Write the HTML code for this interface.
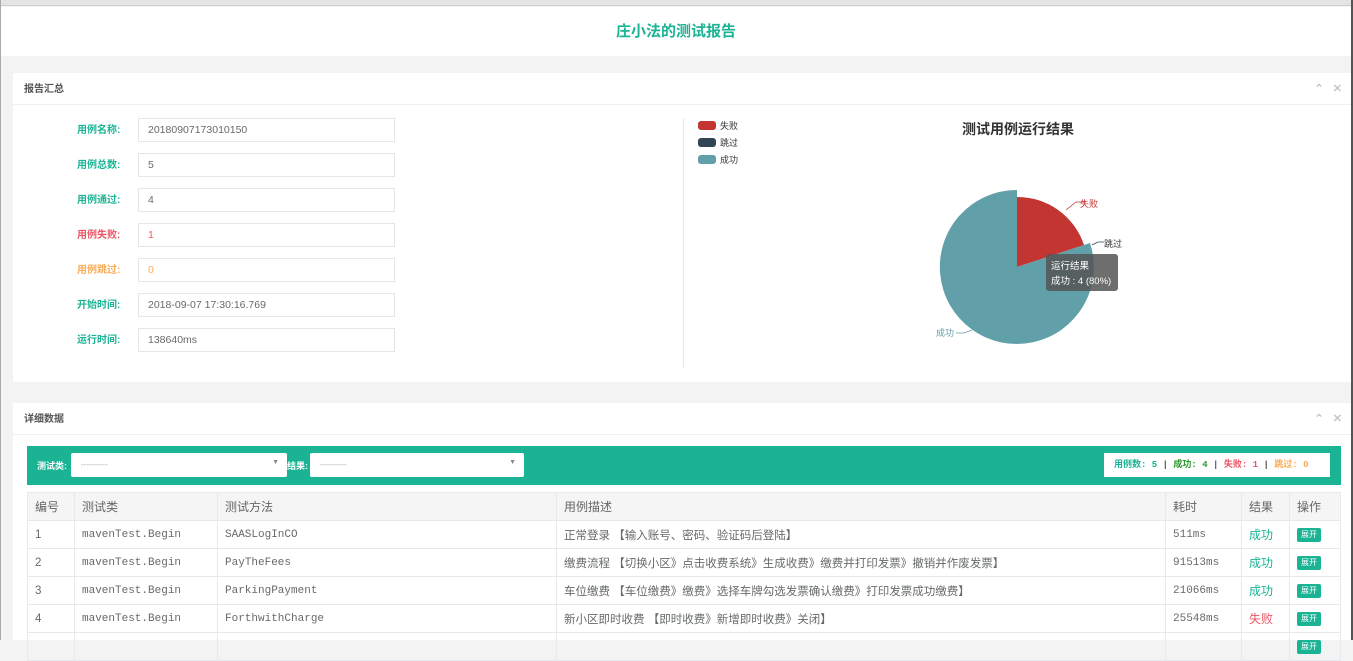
<!DOCTYPE html>
<html><head><meta charset="utf-8"><style>
*{box-sizing:border-box;margin:0;padding:0}
body{width:1353px;height:640px;overflow:hidden;background:#f3f3f4;font-family:"Liberation Sans","Noto Sans CJK SC",sans-serif;position:relative;color:#676a6c}
.a{position:absolute}
.topbar{left:0;top:0;width:1353px;height:6px;background:#e4e4e4;border-bottom:1px solid #d0d0d0}
.leftb{left:0;top:0;width:1px;height:640px;background:#aaa}
.rightb{left:1351px;top:0;width:2px;height:640px;background:#555}
.hdr{left:1px;top:7px;width:1350px;height:49px;background:#fff;text-align:center;color:#1ab394;font-size:15px;font-weight:bold;line-height:50px}
.panel{background:#fff;left:13px;width:1338px}
.ptitle{height:32px;border-bottom:1px solid #eef0f2;font-size:10px;font-weight:bold;color:#555;line-height:33px;padding-left:11px;position:relative}
.tools{position:absolute;right:6px;top:0;font-size:11px;color:#c4c4c4;letter-spacing:3px}
.lbl{font-size:10px;font-weight:bold;left:77px}
.inp{left:138px;width:257px;height:24px;border:1px solid #e5e6e7;font-size:10.5px;line-height:22px;padding-left:9px;color:#676a6c;background:#fff}
.g{color:#1ab394}.r{color:#ed5565}.o{color:#f8ac59}
table{border-collapse:collapse;font-size:11.5px}
td,th{border:1px solid #e7eaec;height:28px;padding-left:7px;text-align:left;font-weight:normal}
th{background:#f5f5f6;font-size:12px;color:#666}
td.m{font-family:"Liberation Mono","Noto Sans CJK SC",monospace;color:#676a6c;font-size:11px}
.btn{display:inline-block;background:#1ab394;color:#fff;font-size:8px;padding:2px 4px;border-radius:2px;line-height:10px}
</style></head><body>
<div class="a topbar"></div>
<div class="a hdr">庄小法的测试报告</div>

<div class="a panel" style="top:73px;height:309px">
 <div class="ptitle">报告汇总<span class="tools">⌃ ✕</span></div>
</div>
<div class="a lbl g" style="top:121px">用例名称:</div>
<div class="a inp" style="top:118px">20180907173010150</div>
<div class="a lbl g" style="top:156px">用例总数:</div>
<div class="a inp" style="top:153px">5</div>
<div class="a lbl g" style="top:191px">用例通过:</div>
<div class="a inp" style="top:188px">4</div>
<div class="a lbl r" style="top:226px">用例失败:</div>
<div class="a inp r" style="top:223px;color:#ed5565">1</div>
<div class="a lbl o" style="top:261px">用例跳过:</div>
<div class="a inp" style="top:258px;color:#f8ac59">0</div>
<div class="a lbl g" style="top:296px">开始时间:</div>
<div class="a inp" style="top:293px">2018-09-07 17:30:16.769</div>
<div class="a lbl g" style="top:331px">运行时间:</div>
<div class="a inp" style="top:328px">138640ms</div>
<div class="a" style="left:683px;top:118px;width:1px;height:250px;background:#e7eaec"></div>

<svg class="a" style="left:684px;top:110px" width="660" height="265">
 <rect x="14" y="11" width="18" height="9" rx="3" fill="#c23531"/><text x="36" y="19" font-size="9" fill="#333">失败</text>
 <rect x="14" y="28" width="18" height="9" rx="3" fill="#2f4554"/><text x="36" y="36" font-size="9" fill="#333">跳过</text>
 <rect x="14" y="45" width="18" height="9" rx="3" fill="#61a0a8"/><text x="36" y="53" font-size="9" fill="#333">成功</text>
 <text x="334" y="24" font-size="14" font-weight="bold" fill="#333" text-anchor="middle">测试用例运行结果</text>
 <path d="M333,157 L333,87 A70,70 0 0 1 400,135 Z" fill="#c23531"/>
 <path d="M333,157 L406,133 A77,77 0 1 1 333,80 Z" fill="#61a0a8"/>
 <polyline points="382,100 392,92 402,92" fill="none" stroke="#c23531" stroke-width="0.8"/>
 <text x="396" y="97" font-size="9" fill="#c23531">失败</text>
 <polyline points="408,135 414,132 420,132" fill="none" stroke="#2f4554" stroke-width="0.8"/>
 <text x="420" y="137" font-size="9" fill="#333">跳过</text>
 <polyline points="288,220 280,223 272,223" fill="none" stroke="#61a0a8" stroke-width="0.8"/>
 <text x="252" y="226" font-size="9" fill="#61a0a8">成功</text>
 <rect x="362" y="144" width="72" height="37" rx="3" fill="#555" opacity="0.85"/>
 <text x="367" y="159" font-size="9.5" fill="#fff">运行结果</text>
 <text x="367" y="174" font-size="9.5" fill="#fff">成功 : 4 (80%)</text>
</svg>

<div class="a panel" style="top:403px;height:237px">
 <div class="ptitle">详细数据<span class="tools">⌃ ✕</span></div>
</div>
<div class="a" style="left:27px;top:446px;width:1314px;height:39px;background:#1ab394"></div>
<div class="a" style="left:37px;top:459px;font-size:9px;font-weight:bold;color:#fff">测试类:</div>
<div class="a" style="left:71px;top:453px;width:216px;height:24px;background:#fff;border-radius:2px;font-size:8px;color:#aaa;line-height:24px;padding-left:10px">----------<span style="position:absolute;right:8px;top:-2px;color:#888;font-size:7px">▼</span></div>
<div class="a" style="left:287px;top:459px;font-size:9px;font-weight:bold;color:#fff">结果:</div>
<div class="a" style="left:310px;top:453px;width:214px;height:24px;background:#fff;border-radius:2px;font-size:8px;color:#aaa;line-height:24px;padding-left:10px">----------<span style="position:absolute;right:8px;top:-2px;color:#888;font-size:7px">▼</span></div>
<div class="a" style="left:1104px;top:453px;width:226px;height:24px;background:#fff;font-size:9px;font-weight:bold;line-height:24px;padding-left:10px;font-family:'Liberation Mono','Noto Sans CJK SC',monospace;white-space:nowrap"><span class="g">用例数: 5</span> <span style="color:#555">|</span> <span style="color:#2a9a2a">成功: 4</span> <span style="color:#555">|</span> <span class="r">失败: 1</span> <span style="color:#555">|</span> <span class="o">跳过: 0</span></div>

<table class="a" style="left:27px;top:492px;width:1314px">
<tr><th style="width:47px">编号</th><th style="width:143px">测试类</th><th style="width:339px">测试方法</th><th style="width:609px">用例描述</th><th style="width:76px">耗时</th><th style="width:48px">结果</th><th>操作</th></tr>
<tr><td>1</td><td class="m">mavenTest.Begin</td><td class="m">SAASLogInCO</td><td>正常登录 【输入账号、密码、验证码后登陆】</td><td class="m">511ms</td><td class="g" style="font-size:12px">成功</td><td><span class="btn">展开</span></td></tr>
<tr><td>2</td><td class="m">mavenTest.Begin</td><td class="m">PayTheFees</td><td>缴费流程 【切换小区》点击收费系统》生成收费》缴费并打印发票》撤销并作废发票】</td><td class="m">91513ms</td><td class="g" style="font-size:12px">成功</td><td><span class="btn">展开</span></td></tr>
<tr><td>3</td><td class="m">mavenTest.Begin</td><td class="m">ParkingPayment</td><td>车位缴费 【车位缴费》缴费》选择车牌勾选发票确认缴费》打印发票成功缴费】</td><td class="m">21066ms</td><td class="g" style="font-size:12px">成功</td><td><span class="btn">展开</span></td></tr>
<tr><td>4</td><td class="m">mavenTest.Begin</td><td class="m">ForthwithCharge</td><td>新小区即时收费 【即时收费》新增即时收费》关闭】</td><td class="m">25548ms</td><td class="r" style="font-size:12px">失败</td><td><span class="btn">展开</span></td></tr>
<tr><td>&nbsp;</td><td></td><td></td><td></td><td></td><td></td><td><span class="btn">展开</span></td></tr>
</table>
<div class="a leftb"></div>
<div class="a rightb"></div>
</body></html>
